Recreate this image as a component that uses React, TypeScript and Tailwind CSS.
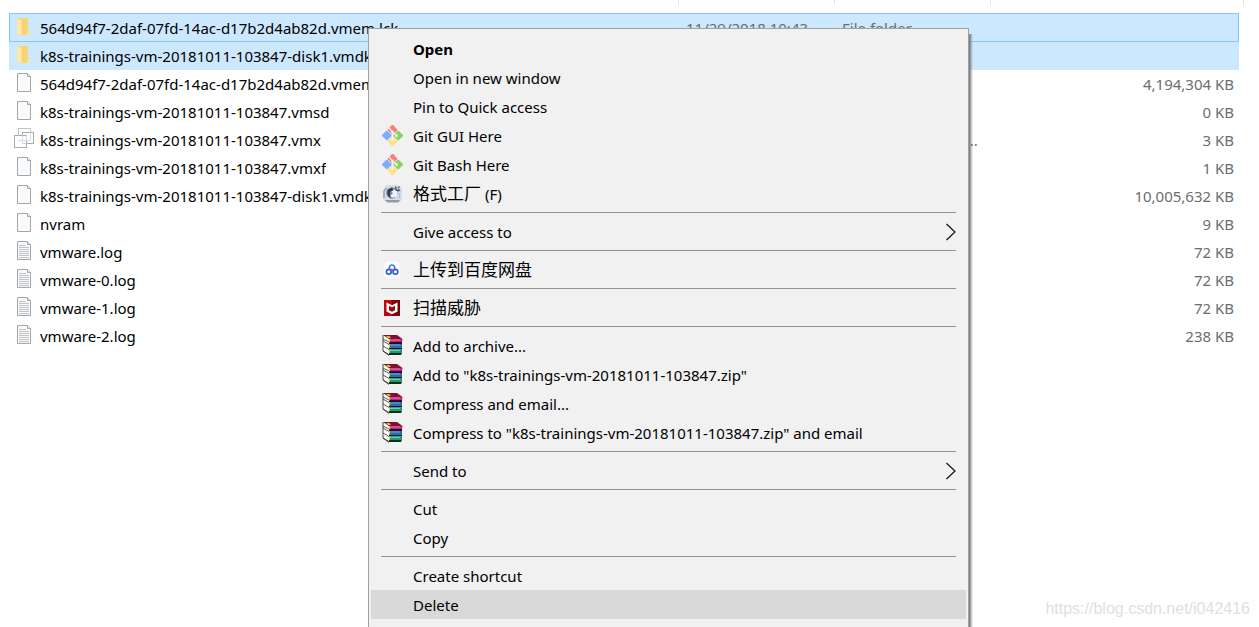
import type { ReactNode } from "react";

type FileKind = "folder" | "blank" | "vmx" | "log";

interface FileRow {
  name: string;
  kind: FileKind;
  date?: string;
  type?: string;
  size?: string;
  state?: "focused" | "selected";
}

const files: FileRow[] = [
  {
    name: "564d94f7-2daf-07fd-14ac-d17b2d4ab82d.vmem.lck",
    kind: "folder",
    date: "11/29/2018 10:43",
    type: "File folder",
    state: "focused",
  },
  { name: "k8s-trainings-vm-20181011-103847-disk1.vmdk.lck", kind: "folder", state: "selected" },
  { name: "564d94f7-2daf-07fd-14ac-d17b2d4ab82d.vmem", kind: "blank", size: "4,194,304 KB" },
  { name: "k8s-trainings-vm-20181011-103847.vmsd", kind: "blank", size: "0 KB" },
  {
    name: "k8s-trainings-vm-20181011-103847.vmx",
    kind: "vmx",
    type: "VMware virtual m...",
    size: "3 KB",
  },
  { name: "k8s-trainings-vm-20181011-103847.vmxf", kind: "blank", size: "1 KB" },
  { name: "k8s-trainings-vm-20181011-103847-disk1.vmdk", kind: "blank", size: "10,005,632 KB" },
  { name: "nvram", kind: "blank", size: "9 KB" },
  { name: "vmware.log", kind: "log", size: "72 KB" },
  { name: "vmware-0.log", kind: "log", size: "72 KB" },
  { name: "vmware-1.log", kind: "log", size: "72 KB" },
  { name: "vmware-2.log", kind: "log", size: "238 KB" },
];

function FileIcon({ kind }: { kind: FileKind }) {
  return (
    <svg className="h-6 w-5 shrink-0" viewBox="0 0 20 24" fill="none">
      {kind === "folder" && (
        <>
          <path d="M4 2h10v12l2 1.500V19H4z" fill="#f6d375" />
          <path d="M13 14.500l3 1V19h-3z" fill="#fae3a0" />
          <path d="M3 2l4.500 2.500V19.500L3 17.500z" fill="#fde8a6" />
        </>
      )}
      {(kind === "blank" || kind === "log") && (
        <>
          <path d="M3.500 1.500h10l3 3v15h-13z" fill="#f8fafb" stroke="#a3a6a8" />
          <path d="M13.500 1.500v3h3" fill="#e6e9eb" stroke="#a3a6a8" />
        </>
      )}
      {kind === "log" && (
        <path
          d="M5 5.500h7M5 7.500h10M5 9.500h10M5 11.500h10M5 13.500h10M5 15.500h10M5 17.500h10"
          stroke="#c0c3c5"
        />
      )}
      {kind === "vmx" && (
        <>
          <rect x="4.500" y="0.500" width="12" height="12" fill="#fff" stroke="#c3c5c7" />
          <rect x="8.500" y="4.500" width="11" height="11" fill="#fff" stroke="#a9acae" />
          <rect x="0.500" y="7.500" width="12" height="12" fill="#fff" stroke="#a9acae" />
          <path d="M8.500 7.500v8h4M4.500 12.500h8v-5M8.500 12.500h8v-8" stroke="#cfdcf0" />
        </>
      )}
    </svg>
  );
}

function GitIcon() {
  return (
    <svg className="h-[21px] w-[21px]" viewBox="0 0 21 21" fill="none">
      <g transform="rotate(45 10.500 10.500)">
        <rect x="2.800" y="2.800" width="7.400" height="7.400" rx="1" fill="#ff7b7b" />
        <rect x="10.800" y="2.800" width="7.400" height="7.400" rx="1" fill="#85d35e" />
        <rect x="2.800" y="10.800" width="7.400" height="7.400" rx="1" fill="#7baeff" />
        <rect x="10.800" y="10.800" width="7.400" height="7.400" rx="1" fill="#ffe27a" />
      </g>
      <path d="M7 3l3.500 4v8M10.500 7l4 3.500" stroke="#f1f1f1" strokeWidth="1.300" />
      <circle cx="10.500" cy="7" r="1.500" fill="#f1f1f1" />
      <circle cx="14.500" cy="10.500" r="1.500" fill="#f1f1f1" />
      <circle cx="10.500" cy="14.500" r="1.500" fill="#f1f1f1" />
    </svg>
  );
}

function FormatFactoryIcon() {
  return (
    <svg className="h-[21px] w-[21px]" viewBox="0 0 21 21" fill="none">
      <path d="M2 4.500L5 2h11l4 3v11l-2 3H4l-3-3V10z" fill="#d5dce5" />
      <path d="M3 17h15l-2 2.500H5z" fill="#8f9baa" />
      <path d="M2 15V8l3-3" stroke="#94a1b1" strokeWidth="1.500" />
      <circle cx="10" cy="10" r="5.800" fill="#8392a6" />
      <circle cx="11.500" cy="10.500" r="4" fill="#eef3f8" />
      <path d="M10 4.500L5.500 7v5l3 3V9l3-2z" fill="#2d3b50" />
      <path d="M8 8.500l3 1.500-1.500 2z" fill="#5a84b8" />
      <path d="M13 3l2 1.500L18 3l-1 3 1.500 2-3 .5L13 7z" fill="#56616f" />
      <circle cx="15.500" cy="5.500" r="1" fill="#e5eaf0" />
      <path d="M16 10l2 2-1 3" stroke="#a9b5c3" />
    </svg>
  );
}

function BaiduIcon() {
  return (
    <svg className="h-4 w-4" viewBox="0 0 16 16" fill="none">
      <rect width="16" height="16" rx="4" fill="#fff" />
      <circle cx="8" cy="5.700" r="2.700" stroke="#3d7bf7" strokeWidth="1.700" />
      <circle cx="4.800" cy="9.800" r="2.400" stroke="#2c62e8" strokeWidth="1.700" />
      <circle cx="11.400" cy="9.800" r="2.400" stroke="#2c62e8" strokeWidth="1.700" />
      <path d="M6 8.800l2.200-1.600" stroke="#f0414b" strokeWidth="1.900" />
    </svg>
  );
}

function McAfeeIcon() {
  return (
    <svg className="h-4 w-4" viewBox="0 0 16 16">
      <path d="M0 0h16v16H0z" fill="#bd0710" />
      <path d="M8 0h8v16H8z" fill="#7a0309" />
      <path d="M2.500 2.500L8 5.200l5.500-2.700v9L8 14.200l-5.500-2.700z" fill="#fff" />
      <path d="M5 5.800l3 1.500 3-1.500v4.400l-3 1.500-3-1.500z" fill="#a3060d" />
    </svg>
  );
}

function RarIcon() {
  return (
    <svg className="h-[21px] w-[21px]" viewBox="0 0 21 21">
      {/* white page edges on the left */}
      <path d="M1 2l6 3v15l-6-4z" fill="#fafafa" />
      <path
        d="M1 6l6 3.500M1 11l6 3.500M1 16l6 3.500M1 4l6 3"
        fill="none"
        stroke="#333"
        strokeWidth="0.800"
      />
      {/* three stacked books */}
      <path d="M1 0h14l5.500 4H7z" fill="#7d1230" />
      <path d="M7 4h13.500L20 7.500H7z" fill="#c42480" />
      <path d="M8 4.500h10v1H8z" fill="#ea74b4" />
      <path d="M7 7h13v2.500H7z" fill="#2a0d1d" />
      <path d="M7 9h13v3.500H7z" fill="#1f6fb8" />
      <path d="M8 9.500h10v1H8z" fill="#62aee4" />
      <path d="M7 12.500h13v2H7z" fill="#0d1c38" />
      <path d="M7 14.500h13V18H7z" fill="#1d9b6c" />
      <path d="M8 15h10v1H8z" fill="#5bd8a8" />
      <path d="M7 18h13l-1 2H7z" fill="#0b2e20" />
      <path d="M4 1h3.500L9 3H6z" fill="#dfbd27" />
      <path d="M7 4h1v3.500H7zM7 9h1v3.500H7zM7 14.500h1V18H7z" fill="#e6cb3d" />
      <path d="M1 0v16l6 4.500" fill="none" stroke="#222" strokeWidth="0.800" />
    </svg>
  );
}

function Chevron() {
  return (
    <svg
      className="mr-[10px] h-[18px] w-[11px]"
      viewBox="0 0 11 18"
      fill="none"
      stroke="#111"
      strokeWidth="1.200"
    >
      <path d="M1.500 1l8.500 8-8.500 8" />
    </svg>
  );
}

interface MenuEntry {
  label: string;
  icon?: ReactNode;
  bold?: boolean;
  cjk?: string;
  submenu?: boolean;
  active?: boolean;
}

// each inner list is a group, groups are divided by a line
const menu: MenuEntry[][] = [
  [
    { label: "Open", bold: true },
    { label: "Open in new window" },
    { label: "Pin to Quick access" },
    { label: "Git GUI Here", icon: <GitIcon /> },
    { label: "Git Bash Here", icon: <GitIcon /> },
    { cjk: "格式工厂", label: " (F)", icon: <FormatFactoryIcon /> },
  ],
  [{ label: "Give access to", submenu: true }],
  [{ cjk: "上传到百度网盘", label: "", icon: <BaiduIcon /> }],
  [{ cjk: "扫描威胁", label: "", icon: <McAfeeIcon /> }],
  [
    { label: "Add to archive...", icon: <RarIcon /> },
    { label: 'Add to "k8s-trainings-vm-20181011-103847.zip"', icon: <RarIcon /> },
    { label: "Compress and email...", icon: <RarIcon /> },
    { label: 'Compress to "k8s-trainings-vm-20181011-103847.zip" and email', icon: <RarIcon /> },
  ],
  [{ label: "Send to", submenu: true }],
  [{ label: "Cut" }, { label: "Copy" }],
  [{ label: "Create shortcut" }, { label: "Delete", active: true }],
];

function MenuItem({ label, icon, bold, cjk, submenu, active }: MenuEntry) {
  return (
    <button
      type="button"
      role="menuitem"
      className={`flex h-[29px] w-full items-center text-left hover:bg-[#d9d9d9] ${
        active ? "bg-[#d9d9d9]" : ""
      } ${bold ? "font-bold" : ""}`}
    >
      <span className="flex w-[42px] shrink-0 justify-center">{icon}</span>
      <span className="flex-1 whitespace-pre">
        {cjk && <span className="text-[17px]">{cjk}</span>}
        {label}
      </span>
      {submenu && <Chevron />}
    </button>
  );
}

function ContextMenu() {
  return (
    <div
      role="menu"
      className="absolute top-7 bottom-0 left-[368px] w-[601px] overflow-hidden border border-b-0 border-[#a0a0a0] bg-[#f1f1f1] px-[2px] pt-[5px] text-black"
    >
      {menu.map((group, i) => (
        <div key={i}>
          {i > 0 && <hr className="mx-[10px] my-1 border-[#919191]" />}
          {group.map((entry) => (
            <MenuItem key={entry.cjk ?? entry.label} {...entry} />
          ))}
        </div>
      ))}
    </div>
  );
}

function rowStyle(state?: FileRow["state"]) {
  if (state === "focused") return "h-[29px] bg-[#cce8ff] outline outline-1 -outline-offset-1 outline-[#84c6fb]";
  if (state === "selected") return "h-7 bg-[#cce8ff]";
  return "h-7";
}

export default function App() {
  return (
    <main className="relative h-screen overflow-hidden bg-white font-['Noto_Sans','Noto_Sans_CJK_SC',sans-serif] text-[15px] leading-5">
      {/* Column dividers */}
      <div className="flex h-[13px] items-start pr-[15px] pl-[9px]">
        <span className="h-[5px] flex-1 border-r border-[#e2e2e2]" />
        <span className="h-[5px] w-[156px] border-r border-[#e2e2e2]" />
        <span className="h-[5px] w-[156px] border-r border-[#e2e2e2]" />
        <span className="h-[5px] w-[253px] border-r border-[#e2e2e2]" />
      </div>

      {/* File list */}
      <div className="pr-5 pl-[9px]">
        <table className="w-full table-fixed">
          <colgroup>
            <col />
            <col className="w-[156px]" />
            <col className="w-[156px]" />
            <col className="w-[248px]" />
          </colgroup>
          <tbody>
            {files.map((file) => (
              <tr key={file.name} className={rowStyle(file.state)}>
                <td className="p-0 pl-[5px] text-black">
                  <div className="flex items-center gap-[6px]">
                    <FileIcon kind={file.kind} />
                    <span className="truncate">{file.name}</span>
                  </div>
                </td>
                <td className="p-0 pl-[7px] whitespace-nowrap text-[#6d6d6d]">{file.date}</td>
                <td className="p-0 pl-[7px] whitespace-nowrap text-[#6d6d6d]">{file.type}</td>
                <td className="p-0 pr-[5px] text-right whitespace-nowrap text-[#6d6d6d]">
                  {file.size}
                </td>
              </tr>
            ))}
          </tbody>
        </table>
      </div>

      {/* Menu shadow on the right side */}
      <div className="absolute top-[34px] bottom-0 left-[969px] w-1 bg-linear-to-r from-[#707070] to-transparent" />
      <ContextMenu />

      <p className="absolute right-[9px] bottom-[6px] font-['Liberation_Sans',sans-serif] text-base text-[#e0e0e0]">
        https://blog.csdn.net/i042416
      </p>
    </main>
  );
}
